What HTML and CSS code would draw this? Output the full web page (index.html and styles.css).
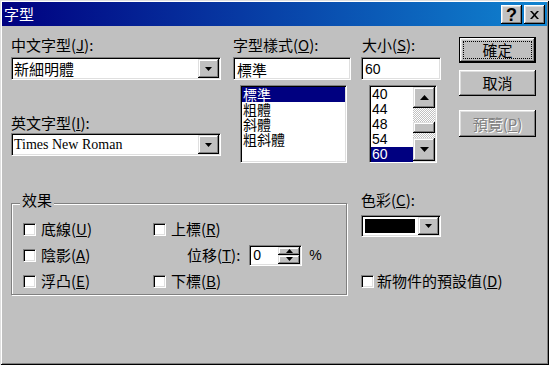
FILE: index.html
```html
<!DOCTYPE html>
<html lang="zh-Hant">
<head>
<meta charset="utf-8">
<title>字型</title>
<link rel="stylesheet" href="styles.css">
</head>
<body>
<div class="window">
  <div class="titlebar">
    <span class="title">字型</span>
    <div class="tbtns">
      <div class="tbtn help">?</div>
      <div class="tbtn close">
        <svg width="9" height="8" viewBox="0 0 9 8"><path d="M0 0h2l2.5 2.8L7 0h2L5.5 4 9 8H7L4.5 5.2 2 8H0l3.5-4z" fill="#000"/></svg>
      </div>
    </div>
  </div>

  <div class="client">
    <div class="toprow">
      <div class="col col-face">
        <div class="label">中文字型(<u>J</u>):</div>
        <div class="combo sunken">
          <div class="combo-text">新細明體</div>
          <div class="dd-btn"><svg width="7" height="4" viewBox="0 0 7 4"><path d="M0 0h7L3.5 4z" fill="#000"/></svg></div>
        </div>
        <div class="label label-en">英文字型(<u>I</u>):</div>
        <div class="combo sunken">
          <div class="combo-text latin">Times New Roman</div>
          <div class="dd-btn"><svg width="7" height="4" viewBox="0 0 7 4"><path d="M0 0h7L3.5 4z" fill="#000"/></svg></div>
        </div>
      </div>

      <div class="col col-style">
        <div class="label">字型樣式(<u>O</u>):</div>
        <div class="edit sunken">標準</div>
        <div class="listbox sunken style-list">
          <div class="item sel">標準</div>
          <div class="item">粗體</div>
          <div class="item">斜體</div>
          <div class="item">粗斜體</div>
        </div>
      </div>

      <div class="col col-size">
        <div class="label">大小(<u>S</u>):</div>
        <div class="edit sunken num">60</div>
        <div class="listbox sunken size-list">
          <div class="items">
            <div class="item num">40</div>
            <div class="item num">44</div>
            <div class="item num">48</div>
            <div class="item num">54</div>
            <div class="item num sel">60</div>
          </div>
          <div class="vscroll">
            <div class="sbtn"><svg width="9" height="5" viewBox="0 0 9 5"><path d="M0 5h9L4.5 0z" fill="#000"/></svg></div>
            <div class="track track-a"></div>
            <div class="thumb"></div>
            <div class="track track-b"></div>
            <div class="sbtn sbtn-down"><svg width="9" height="5" viewBox="0 0 9 5"><path d="M0 0h9L4.5 5z" fill="#000"/></svg></div>
          </div>
        </div>
      </div>

      <div class="col col-btns">
        <div class="btn btn-default"><span class="focus">確定</span></div>
        <div class="btn">取消</div>
        <div class="btn btn-disabled">預覽(<u>P</u>)</div>
      </div>
    </div>

    <div class="bottomrow">
      <fieldset class="group">
        <legend>效果</legend>
        <div class="effects">
          <div class="check"><span class="box"></span>底線(<u>U</u>)</div>
          <div class="check"><span class="box"></span>上標(<u>R</u>)</div>
          <div class="check"><span class="box"></span>陰影(<u>A</u>)</div>
          <div class="offset">
            <span>位移(<u>T</u>):</span>
            <div class="spin sunken">
              <div class="spin-edit num">0</div>
              <div class="spin-btns">
                <div class="spin-btn"><svg width="7" height="4" viewBox="0 0 7 4"><path d="M0 4h7L3.5 0z" fill="#000"/></svg></div>
                <div class="spin-btn"><svg width="7" height="4" viewBox="0 0 7 4"><path d="M0 0h7L3.5 4z" fill="#000"/></svg></div>
              </div>
            </div>
            <span class="pct">%</span>
          </div>
          <div class="check"><span class="box"></span>浮凸(<u>E</u>)</div>
          <div class="check"><span class="box"></span>下標(<u>B</u>)</div>
        </div>
      </fieldset>

      <div class="col col-color">
        <div class="label">色彩(<u>C</u>):</div>
        <div class="combo sunken color-combo">
          <div class="swatch-wrap"><div class="swatch"></div></div>
          <div class="dd-btn"><svg width="7" height="4" viewBox="0 0 7 4"><path d="M0 0h7L3.5 4z" fill="#000"/></svg></div>
        </div>
        <div class="check default-check"><span class="box"></span>新物件的預設值(<u>D</u>)</div>
      </div>
    </div>
  </div>
</div>
</body>
</html>
```

FILE: styles.css
```css
* { box-sizing: border-box; }
html, body { margin: 0; padding: 0; }
body {
  width: 549px;
  height: 365px;
  overflow: hidden;
  background: #c0c0c0;
  font-family: "Noto Sans CJK TC", "Noto Sans", sans-serif;
  font-size: 15px;
  line-height: 16px;
  color: #000;
}
u { text-decoration: underline; text-underline-offset: 1px; }

.window {
  width: 549px;
  height: 365px;
  background: #c0c0c0;
  box-shadow: inset 1px 1px #dfdfdf, inset -1px -1px #000, inset 2px 2px #fff, inset -2px -2px #808080;
  display: flex;
  flex-direction: column;
}

.titlebar {
  margin: 2px 2px 0;
  height: 24px;
  background: linear-gradient(to right, #000080, #1084d0);
  display: flex;
  align-items: center;
  justify-content: space-between;
  padding: 0 2px 0 2px;
}
.title { color: #fff; font-size: 15px; line-height: 16px; }
.tbtns { display: flex; gap: 2px; margin-top: 1px; }
.tbtn {
  width: 21px;
  height: 19px;
  background: #c0c0c0;
  box-shadow: inset -1px -1px #000, inset 1px 1px #fff, inset -2px -2px #808080, inset 2px 2px #dfdfdf;
  display: flex;
  align-items: center;
  justify-content: center;
}
.help {
  font-family: "Liberation Sans", Arial, sans-serif;
  font-weight: bold;
  font-size: 18px;
  line-height: 16px;
}

.sunken {
  background: #fff;
  border: 1px solid;
  border-color: #808080 #fff #fff #808080;
  box-shadow: inset 1px 1px #000, inset -1px -1px #dfdfdf;
}

.client { padding-left: 11px; display: flex; flex-direction: column; }
.toprow { display: flex; align-items: flex-start; margin-top: 11px; }
.col { display: flex; flex-direction: column; }
.label { height: 16px; line-height: 16px; white-space: nowrap; }

.col-face { width: 210px; }
.combo {
  height: 23px;
  margin-top: 4px;
  display: flex;
  align-items: stretch;
  padding: 1px;
}
.combo-text { flex: 1; padding-left: 1px; line-height: 20px; white-space: nowrap; }
.latin { font-family: "Liberation Serif", "Times New Roman", serif; font-size: 14px; }
.dd-btn {
  width: 21px;
  background: #c0c0c0;
  box-shadow: inset -1px -1px #000, inset 1px 1px #dfdfdf, inset -2px -2px #808080, inset 2px 2px #fff;
  display: flex;
  align-items: center;
  justify-content: center;
}
.label-en { margin-top: 35px; }
.label-en + .combo { margin-top: 2px; }

.col-style { width: 118px; margin-left: 12px; }
.edit {
  height: 23px;
  margin-top: 4px;
  padding: 2px 3px;
  line-height: 19px;
}
.listbox { margin-top: 5px; height: 78px; padding: 1px; overflow: hidden; }
.style-list { margin-left: 7px; width: 107px; }
.item { height: 15px; line-height: 15px; padding-left: 1px; white-space: nowrap; }
.style-list .item { font-size: 14px; }
.item.sel { background: #000080; color: #fff; }
.num { font-family: "Liberation Sans", Arial, sans-serif; font-size: 14px; }

.col-size { width: 80px; margin-left: 10px; }
.col-size .label { padding-left: 1px; }
.size-list { margin-left: 8px; width: 68px; display: flex; }
.items { flex: 1; }
.vscroll { width: 22px; display: flex; flex-direction: column; }
.sbtn {
  height: 21px;
  background: #c0c0c0;
  box-shadow: inset -1px -1px #000, inset 1px 1px #dfdfdf, inset -2px -2px #808080, inset 2px 2px #fff;
  display: flex;
  align-items: center;
  justify-content: center;
}
.sbtn-down { flex: 1; }
.track {
  background-color: #c0c0c0;
  background-image: conic-gradient(#fff 25%, #c0c0c0 0 50%, #fff 0 75%, #c0c0c0 0);
  background-size: 2px 2px;
}
.track-a { height: 14px; }
.track-b { height: 5px; }
.thumb {
  height: 11px;
  background: #c0c0c0;
  box-shadow: inset -1px -1px #000, inset 1px 1px #dfdfdf, inset -2px -2px #808080, inset 2px 2px #fff;
}

.col-btns { width: 77px; margin-left: 18px; }
.btn {
  height: 26px;
  background: #c0c0c0;
  box-shadow: inset -1px -1px #000, inset 1px 1px #fff, inset -2px -2px #808080, inset 2px 2px #dfdfdf;
  display: flex;
  align-items: center;
  justify-content: center;
  margin-top: 7px;
  white-space: nowrap;
}
.btn-default {
  margin-top: 0;
  border: 1px solid #000;
  padding: 3px;
}
.focus {
  flex: 1;
  align-self: stretch;
  display: flex;
  align-items: center;
  justify-content: center;
  outline: 1px dotted #000;
  outline-offset: -1px;
}
.btn-disabled { margin-top: 14px; color: #808080; text-shadow: 1px 1px #fff; height: 27px; }

.bottomrow { display: flex; align-items: flex-start; margin-top: 29px; }
.group {
  margin: 0;
  min-width: 0;
  width: 336px;
  height: 103px;
  padding: 2px 0 0 11px;
  border: 1px solid #808080;
  box-shadow: inset 1px 1px #fff, 1px 1px #fff;
}
.group legend {
  margin-left: -3px;
  padding: 0 2px 6px;
  line-height: 16px;
  background: #c0c0c0;
}
.effects {
  display: grid;
  grid-template-columns: 130px auto;
  grid-auto-rows: 26px;
}
.check { display: flex; align-items: center; white-space: nowrap; }
.box {
  width: 13px;
  height: 13px;
  margin-right: 5px;
  background: #fff;
  border: 1px solid;
  border-color: #808080 #fff #fff #808080;
  box-shadow: inset 1px 1px #000, inset -1px -1px #dfdfdf;
  flex: none;
}
.offset { display: flex; align-items: center; padding-left: 34px; white-space: nowrap; }
.spin {
  margin-left: 9px;
  width: 53px;
  height: 21px;
  display: flex;
  padding: 1px;
}
.spin-edit { flex: 1; padding-left: 2px; line-height: 17px; }
.spin-btns { width: 22px; display: flex; flex-direction: column; }
.spin-btn {
  flex: 1;
  background: #c0c0c0;
  box-shadow: inset -1px -1px #000, inset 1px 1px #dfdfdf, inset -2px -2px #808080, inset 2px 2px #fff;
  display: flex;
  align-items: center;
  justify-content: center;
}
.pct { margin-left: 7px; font-family: "Liberation Sans", Arial, sans-serif; font-size: 14px; }

.col-color { margin-left: 14px; width: 120px; }
.color-combo { width: 80px; height: 22px; margin-top: 7px; }
.swatch-wrap { flex: 1; padding: 2px 3px 2px 2px; }
.swatch { height: 100%; background: #000; }
.default-check { margin-top: 31px; height: 26px; }
.default-check .box { margin-right: 3px; }
```
